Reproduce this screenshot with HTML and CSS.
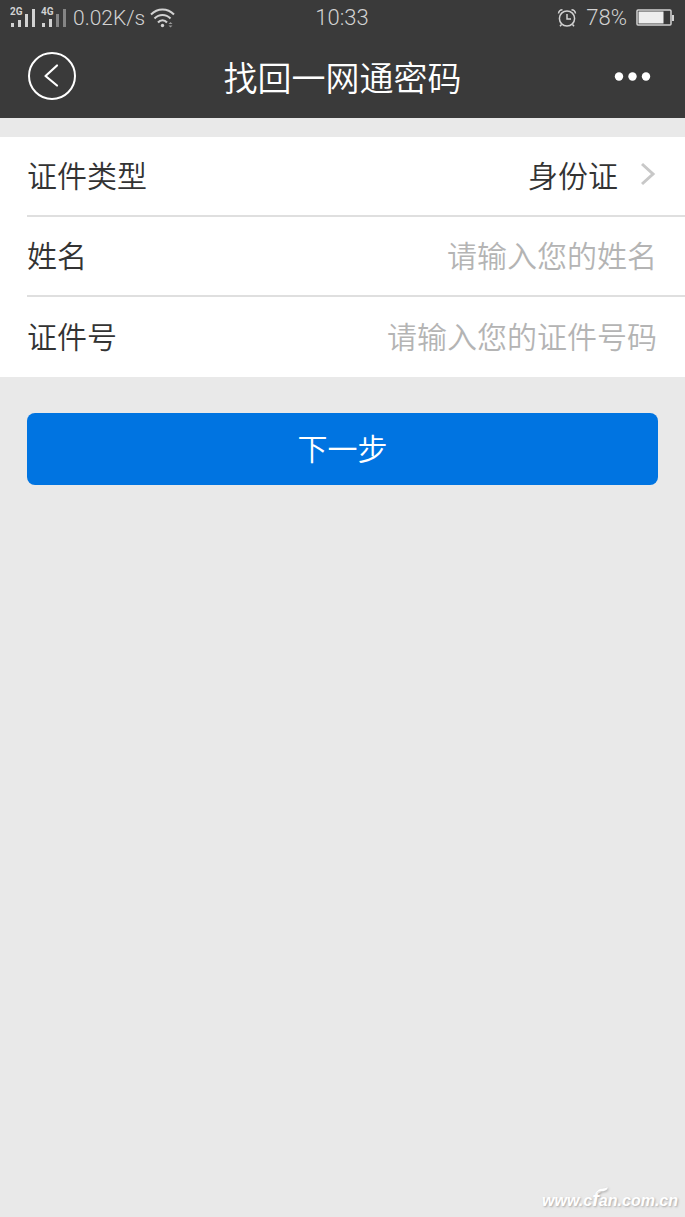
FILE: index.html
```html
<!DOCTYPE html>
<html lang="zh-CN">
<head>
    <meta charset="UTF-8">
    <meta name="viewport" content="width=device-width, initial-scale=1.0">
    <title>找回一网通密码</title>
    <link rel="stylesheet" href="styles.css">
</head>
<body>
    <div class="status-bar">
        <div class="status-left">
            <svg class="signals" width="58" height="22" viewBox="0 0 58 22" fill="#d2d2d2">
                <text x="0" y="8">2G</text>
                <rect x="1" y="16" width="3" height="4"/>
                <rect x="8" y="13" width="3" height="7"/>
                <rect x="15" y="7" width="3" height="13"/>
                <rect x="22" y="2" width="3" height="18"/>
                <text x="31" y="8">4G</text>
                <rect x="32" y="16" width="3" height="4"/>
                <rect x="39" y="12" width="3" height="8"/>
                <rect x="46" y="7" width="3" height="13" fill="#858585"/>
                <rect x="53" y="2" width="3" height="18" fill="#858585"/>
            </svg>
            <span class="speed">0.02K/s</span>
            <svg width="25" height="22" viewBox="0 0 25 22" fill="none" stroke="#d2d2d2" stroke-width="2">
                <path d="M1 7.5C7.500 .7 17.500 .7 24 7.500M4.500 11.500C9 6.800 16 6.800 20.500 11.500M8 15.500C10.500 12.500 14.500 12.500 17 15.500"/>
                <circle cx="12.500" cy="18.500" r="1.700" fill="#d2d2d2" stroke="none"/>
                <path d="M18.500 17L20.500 15L22.500 17zM18.500 18.500L20.500 20.500L22.500 18.500z" fill="#999" stroke="none"/>
            </svg>
        </div>
        <span class="time">10:33</span>
        <div class="status-right">
            <svg width="20" height="20" viewBox="0 0 20 20" fill="none" stroke="#d2d2d2" stroke-width="1.500">
                <circle cx="10" cy="10.500" r="7.600"/>
                <path d="M10 6V11H14M1.500 5.500Q2 2 5.500 1.800M18.500 5.500Q18 2 14.500 1.800M4.500 16.500L3 18.300M15.500 16.500L17 18.300"/>
            </svg>
            <span class="percent">78%</span>
            <svg width="38" height="18" viewBox="0 0 38 18">
                <rect x="1" y="1" width="34" height="15" rx="1" fill="none" stroke="#d2d2d2" stroke-width="1.500"/>
                <rect x="2.500" y="2.500" width="25" height="12" fill="#ededed"/>
                <rect x="36" y="6" width="2" height="6" fill="#d2d2d2"/>
            </svg>
        </div>
    </div>

    <header class="header">
        <button type="button" class="icon-btn" aria-label="返回">
            <svg width="50" height="50" viewBox="0 0 50 50" fill="none" stroke="#fff" stroke-width="2">
                <circle cx="25" cy="24" r="23"/>
                <path d="M30 13.500L18.500 24L30 33.500" stroke-width="2.200" stroke-linecap="round" stroke-linejoin="round"/>
            </svg>
        </button>
        <h1>找回一网通密码</h1>
        <button type="button" class="icon-btn" aria-label="更多">
            <svg width="50" height="50" viewBox="0 0 50 50" fill="#fff">
                <circle cx="11" cy="24.500" r="4.200"/>
                <circle cx="24.500" cy="24.500" r="4.200"/>
                <circle cx="38" cy="24.500" r="4.200"/>
            </svg>
        </button>
    </header>

    <main>
        <form>
            <div class="fields">
                <div class="form-row">
                    <label for="idType">证件类型</label>
                    <select id="idType">
                        <option>身份证</option>
                    </select>
                    <svg class="chevron" width="16" height="24" viewBox="0 0 16 24" fill="none" stroke="#c8c8c8" stroke-width="3">
                        <path d="M1 2L12 12L1 22"/>
                    </svg>
                </div>
                <div class="form-row">
                    <label for="userName">姓名</label>
                    <input type="text" id="userName" placeholder="请输入您的姓名">
                </div>
                <div class="form-row">
                    <label for="idNumber">证件号</label>
                    <input type="text" id="idNumber" placeholder="请输入您的证件号码">
                </div>
            </div>
            <button type="button" class="next-btn">下一步</button>
        </form>
    </main>

    <footer class="watermark">
        <span>www.c<span class="tall">f</span>an.com.cn</span>
        <svg class="leaf" width="12" height="7" viewBox="0 0 12 7">
            <path d="M0 6C2 2 4 2 7 1.500C9 1.200 11 1 11.500 0C12 3 9 4 6 4.300C3 4.500 2 4.500 0 6z" fill="#fff"/>
        </svg>
    </footer>
</body>
</html>
```

FILE: styles.css
```css
* {
    box-sizing: border-box;
}

body {
    font-family: 'Noto Sans CJK SC', sans-serif;
    font-weight: 350;
    background: #e9e9e9;
    margin: 0;
    min-height: 100vh;
    display: flex;
    flex-direction: column;
    color: #333;
}

.status-bar {
    display: grid;
    grid-template-columns: 1fr auto 1fr;
    align-items: center;
    height: 36px;
    padding: 0 11px 0 10px;
    background: #3a3a3a;
    color: #d2d2d2;
    font-family: Roboto, sans-serif;
    font-size: 22px;
    font-weight: 300;
    line-height: 36px;
}

.status-left,
.status-right {
    display: flex;
    align-items: center;
}

.status-left {
    gap: 5px;
}

.status-right {
    justify-content: flex-end;
    gap: 9px;
}

.signals text {
    font-size: 10px;
    font-weight: bold;
}

.speed {
    font-size: 21px;
}

.header {
    display: flex;
    align-items: center;
    justify-content: space-between;
    height: 82px;
    padding: 0 27px;
    background: #3a3a3a;
    color: #fff;
}

.header h1 {
    margin: 0;
    font-size: 34px;
    font-weight: 350;
    line-height: 48px;
}

.icon-btn {
    display: flex;
    padding: 0;
    border: none;
    background: none;
    cursor: pointer;
}

main {
    flex: 1;
    padding-top: 19px;
}

.fields {
    background: #fff;
    padding-left: 27px;
}

.form-row {
    display: flex;
    align-items: center;
    height: 80px;
    padding: 0 28px 4px 0;
    border-bottom: 2px solid #dfdfdf;
    font-size: 30px;
}

.form-row:last-child {
    border-bottom: none;
}

.form-row input,
.form-row select {
    flex: 1;
    min-width: 0;
    height: 60px;
    padding: 0;
    border: none;
    outline: none;
    background: none;
    font: inherit;
    color: #333;
    text-align: right;
}

.form-row select {
    appearance: none;
    text-align-last: right;
}

.form-row input::placeholder {
    color: #b4b4b4;
}

.chevron {
    margin-left: 23px;
}

.next-btn {
    display: block;
    width: calc(100% - 54px);
    height: 72px;
    margin: 36px auto 0;
    padding: 0 0 4px;
    border: none;
    border-radius: 8px;
    background: #0074e1;
    color: #fff;
    font: inherit;
    font-size: 30px;
    cursor: pointer;
}

.watermark {
    position: relative;
    align-self: flex-end;
    padding: 0 7px 4px 0;
    font-family: 'Liberation Sans', sans-serif;
    font-size: 16px;
    font-weight: bold;
    font-style: italic;
    line-height: 24px;
    color: #fff;
    text-shadow: 1px 1px 2px #aaa;
}

.tall {
    font-size: 20px;
}

/* leaf sits over the "f" of the site name */
.leaf {
    position: absolute;
    left: 54px;
    top: 0;
    filter: drop-shadow(1px 1px 1px #aaa);
}
```
